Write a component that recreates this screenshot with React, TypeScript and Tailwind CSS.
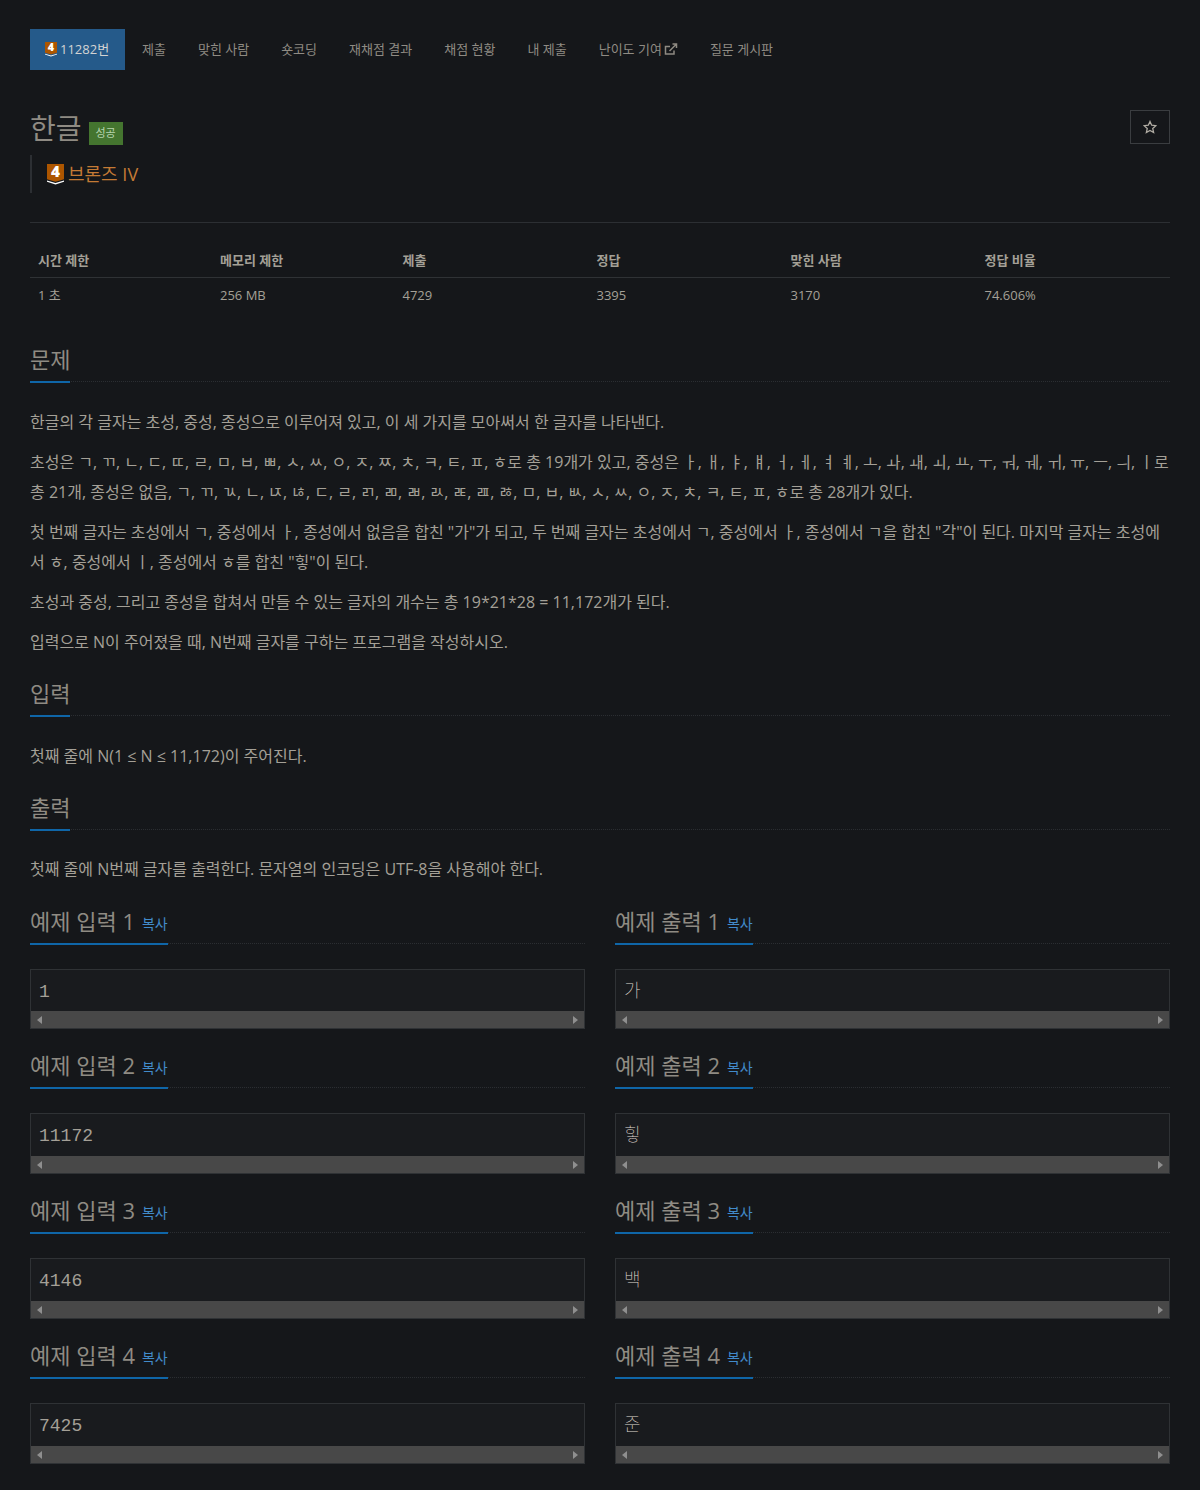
const sans = 'font-["Open_Sans","Noto_Sans_CJK_KR",sans-serif]';

function TierIcon({ size }: { size: number }) {
  return (
    <svg width={size} height={size * 1.2} viewBox="0 0 20 24" className="shrink-0 overflow-visible">
      <path d="M0 0H20V18L10 21L0 18Z" fill="#ad5600" />
      <path d="M0 19.5L10 22.5L20 19.5V21L10 24L0 21Z" fill="#ffffff" />
      <text x="10" y="15.5" textAnchor="middle" fontSize="18" fontWeight="800" fill="#ffffff" fontFamily="Open Sans, sans-serif">4</text>
    </svg>
  );
}

const tabs = ['제출', '맞힌 사람', '숏코딩', '재채점 결과', '채점 현황', '내 제출'];

function Heading({ title, copy, blueWidth }: { title: string; copy?: boolean; blueWidth: string }) {
  return (
    <div className="border-b border-dotted border-[#2b2e32] h-[36px]">
      <div className={`${blueWidth} h-[37px] border-b-2 border-[#0f66a8] flex items-start whitespace-nowrap`}>
        <span className="text-[22px] leading-[26px] text-[#8f8b83]">{title}</span>
        {copy && <span className="text-[14px] leading-[20px] mt-[6px] text-[#428bca] ml-[7px]">복사</span>}
      </div>
    </div>
  );
}

function SampleBox({ text, first, hangul }: { text: string; first: boolean; hangul?: boolean }) {
  return (
    <div className={`border border-[#2f3235] bg-[#191b1e] flex flex-col ${first ? 'h-[60px]' : 'h-[61px]'}`}>
      <div className={`px-[8px] pt-[11px] text-[18px] leading-[22px] font-thin font-['Liberation_Mono','Noto_Sans_CJK_KR',monospace] ${hangul ? 'text-[#e0dcd2]' : 'text-[#a4a097]'} ${first ? 'h-[41px]' : 'h-[42px]'}`}>
        {text}
      </div>
      <div className="h-[17px] bg-[#484848] flex items-center justify-between px-[6px]">
        <span className="w-0 h-0 border-y-[4px] border-y-transparent border-r-[5px] border-r-[#8f8f8f]" />
        <span className="w-0 h-0 border-y-[4px] border-y-transparent border-l-[5px] border-l-[#8f8f8f]" />
      </div>
    </div>
  );
}

const samples = [
  ['1', '가'],
  ['11172', '힣'],
  ['4146', '백'],
  ['7425', '준'],
];

export default function App() {
  return (
    <div className={`w-[1200px] h-[1490px] overflow-hidden bg-[#15171a] px-[30px] pt-[29px] text-[#a4a097] ${sans}`}>
      <nav className="flex h-[41px] items-center text-[13px] text-[#8f8b83]">
        <div className="h-[41px] w-[95px] mr-[1px] bg-[#255a8a] pl-[15px] flex items-center gap-[3px] text-[#d3d3d3]">
          <TierIcon size={12} />
          <span>11282번</span>
        </div>
        {tabs.map((t) => (
          <span key={t} className="px-[16px]">{t}</span>
        ))}
        <span className="px-[16px] flex items-center gap-[2px]">
          난이도 기여
          <svg width="14" height="13" viewBox="0 0 14 13" fill="none" stroke="#8f8b83" strokeWidth="1.5">
            <path d="M10 7.5V11H1.5V3.5H6" />
            <path d="M5.5 8L12 1.5M8.5 1H12.5V5" />
          </svg>
        </span>
        <span className="px-[16px]">질문 게시판</span>
      </nav>

      <div className="flex justify-between items-start mt-[40px]">
        <div className="flex items-end gap-[7px] h-[36px]">
          <span className="text-[28px] leading-[36px] text-[#8f8b83]">한글</span>
          <span className="bg-[#44752f] text-[#b7d4ae] text-[11px] h-[23px] w-[34px] mb-[1px] flex items-center justify-center">성공</span>
        </div>
        <div className="w-[40px] h-[34px] border border-[#3a3d40] flex items-center justify-center">
          <svg width="14" height="14" viewBox="0 0 24 24" fill="none" stroke="#b0aca3" strokeWidth="2.2" strokeLinejoin="miter">
            <path d="M12 2.5L14.9 9L22 9.8L16.7 14.5L18.2 21.5L12 17.9L5.8 21.5L7.3 14.5L2 9.8L9.1 9Z" />
          </svg>
        </div>
      </div>

      <div className="mt-[9px] h-[38px] border-l-2 border-[#2c2f33] pl-[15px] flex items-center gap-[4px] text-[#c47a35] text-[18px]">
        <TierIcon size={17} />
        <span>브론즈 IV</span>
      </div>

      <div className="mt-[29px] border-t border-[#2c2f33]">
        <div className="grid grid-cols-[182px_182.5px_194px_194px_194px_194px] h-[55px] items-end border-b border-[#2f3235] text-[13px] font-bold text-[#a4a097] pb-[7px] px-[8px]">
          <span>시간 제한</span>
          <span>메모리 제한</span>
          <span>제출</span>
          <span>정답</span>
          <span>맞힌 사람</span>
          <span>정답 비율</span>
        </div>
        <div className="grid grid-cols-[182px_182.5px_194px_194px_194px_194px] h-[35px] items-center text-[13px] text-[#a4a097] px-[8px]">
          <span>1 초</span>
          <span>256 MB</span>
          <span>4729</span>
          <span>3395</span>
          <span>3170</span>
          <span>74.606%</span>
        </div>
      </div>

      <div className="mt-[33px]"><Heading title="문제" blueWidth="w-[40px]" /></div>
      <div className="text-[16px] leading-[30px] mt-[25px] text-[#a4a097]">
        <p className="mb-[10px]">한글의 각 글자는 초성, 중성, 종성으로 이루어져 있고, 이 세 가지를 모아써서 한 글자를 나타낸다.</p>
        <p className="mb-[10px]">초성은 ㄱ, ㄲ, ㄴ, ㄷ, ㄸ, ㄹ, ㅁ, ㅂ, ㅃ, ㅅ, ㅆ, ㅇ, ㅈ, ㅉ, ㅊ, ㅋ, ㅌ, ㅍ, ㅎ로 총 19개가 있고, 중성은 ㅏ, ㅐ, ㅑ, ㅒ, ㅓ, ㅔ, ㅕ ㅖ, ㅗ, ㅘ, ㅙ, ㅚ, ㅛ, ㅜ, ㅝ, ㅞ, ㅟ, ㅠ, ㅡ, ㅢ, ㅣ로 총 21개, 종성은 없음, ㄱ, ㄲ, ㄳ, ㄴ, ㄵ, ㄶ, ㄷ, ㄹ, ㄺ, ㄻ, ㄼ, ㄽ, ㄾ, ㄿ, ㅀ, ㅁ, ㅂ, ㅄ, ㅅ, ㅆ, ㅇ, ㅈ, ㅊ, ㅋ, ㅌ, ㅍ, ㅎ로 총 28개가 있다.</p>
        <p className="mb-[10px]">첫 번째 글자는 초성에서 ㄱ, 중성에서 ㅏ, 종성에서 없음을 합친 "가"가 되고, 두 번째 글자는 초성에서 ㄱ, 중성에서 ㅏ, 종성에서 ㄱ을 합친 "각"이 된다. 마지막 글자는 초성에서 ㅎ, 중성에서 ㅣ, 종성에서 ㅎ를 합친 "힣"이 된다.</p>
        <p className="mb-[10px]">초성과 중성, 그리고 종성을 합쳐서 만들 수 있는 글자의 개수는 총 19*21*28 = 11,172개가 된다.</p>
        <p>입력으로 N이 주어졌을 때, N번째 글자를 구하는 프로그램을 작성하시오.</p>
      </div>

      <div className="mt-[23px]"><Heading title="입력" blueWidth="w-[40px]" /></div>
      <p className="text-[16px] leading-[30px] mt-[25px]">첫째 줄에 N(1 ≤ N ≤ 11,172)이 주어진다.</p>

      <div className="mt-[23px]"><Heading title="출력" blueWidth="w-[40px]" /></div>
      <p className="text-[16px] leading-[30px] mt-[24px]">첫째 줄에 N번째 글자를 출력한다. 문자열의 인코딩은 UTF-8을 사용해야 한다.</p>

      <div className="mt-[24px] grid grid-cols-2 gap-x-[30px]">
        {samples.map(([input, output], i) => (
          <div key={i} className="contents">
            <div className="mb-[23px]">
              <Heading title={`예제 입력 ${i + 1}`} copy blueWidth="w-[138px]" />
              <div className="mt-[25px]"><SampleBox text={input} first={i === 0} /></div>
            </div>
            <div className="mb-[23px]">
              <Heading title={`예제 출력 ${i + 1}`} copy blueWidth="w-[138px]" />
              <div className="mt-[25px]"><SampleBox text={output} first={i === 0} hangul /></div>
            </div>
          </div>
        ))}
      </div>
    </div>
  );
}
